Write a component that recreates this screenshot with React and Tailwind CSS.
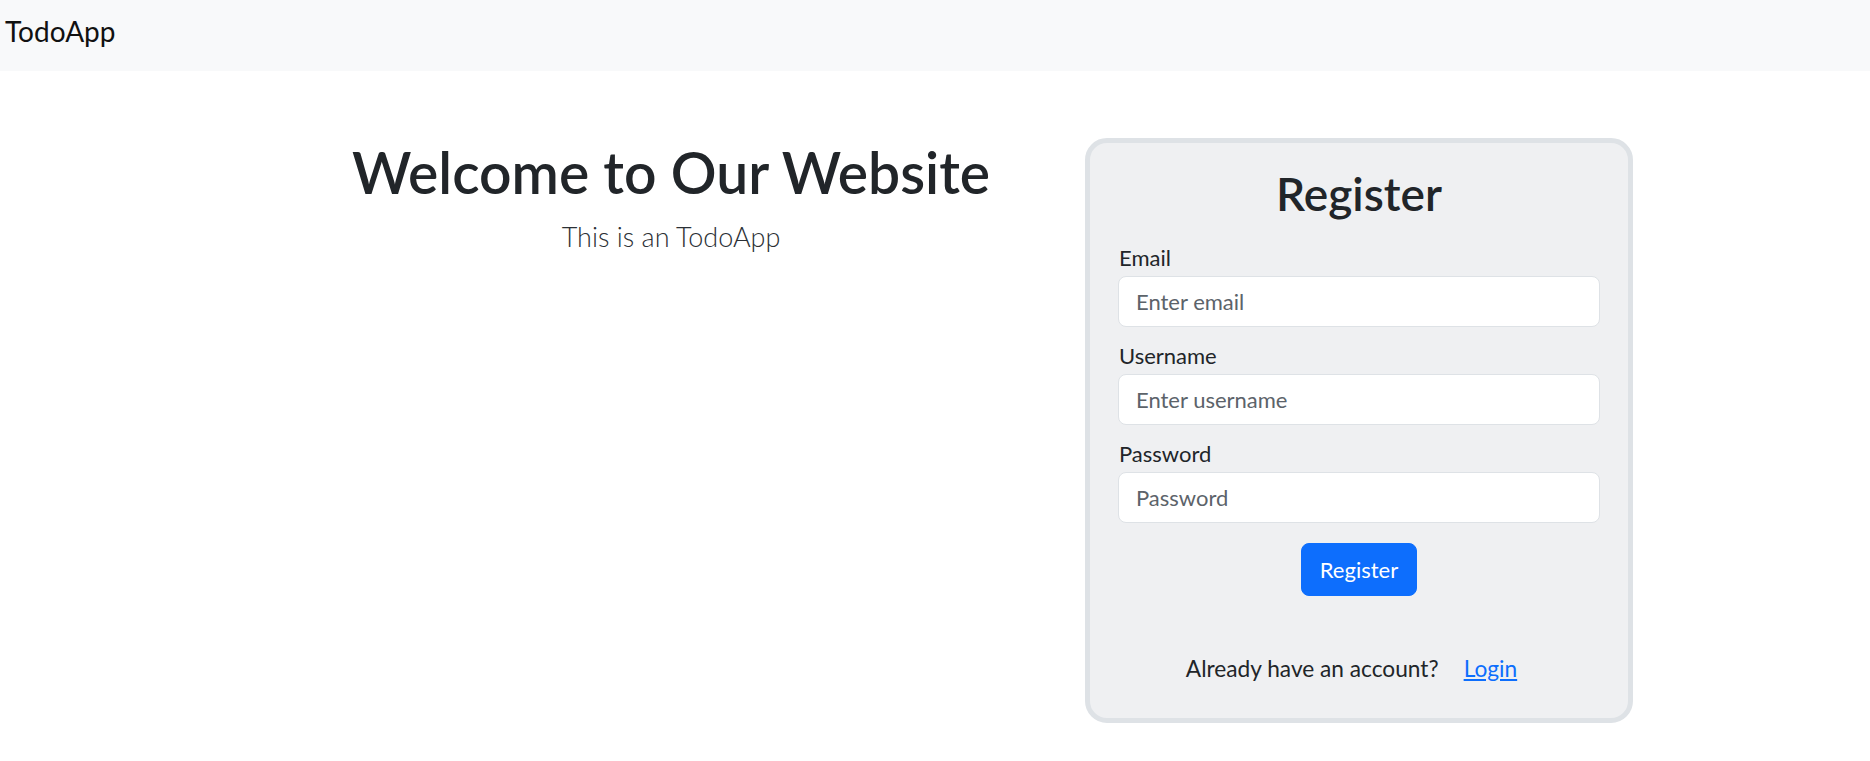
import React, { useState } from "react";

const Field = ({ label, type, placeholder, value, onChange, last }) => (
  <div className={last ? "flex flex-col" : "flex flex-col mb-[16px]"}>
    <label className="text-[22px] leading-[26px] h-[26px] text-[#212529] mb-[5px] pl-[1px]">
      {label}
    </label>
    <input
      type={type}
      value={value}
      onChange={onChange}
      placeholder={placeholder}
      className="w-full h-[51px] px-[17px] text-[22px] text-[#212529] bg-white border border-[#dee2e6] rounded-[8px] placeholder:text-[#5c636a] focus:outline-none"
    />
  </div>
);

const App = () => {
  const [form, setForm] = useState({ email: "", username: "", password: "" });

  const handleChange = (field) => (e) =>
    setForm({ ...form, [field]: e.target.value });

  const handleSubmit = (e) => {
    e.preventDefault();
  };

  return (
    <div className="min-h-screen bg-white font-['Lato',sans-serif] text-[#212529]">
      {/* navbar */}
      <nav className="h-[71px] bg-[#f8f9fa] flex items-start pt-[13px] pl-[5px]">
        <a href="#" className="text-[28px] leading-[36px] text-[#111]">
          TodoApp
        </a>
      </nav>

      <main className="flex items-start pt-[67px]">
        {/* welcome text */}
        <section className="w-[1085px] pl-[257px] flex flex-col items-center">
          <h1 className="text-[57px] leading-[68px] font-semibold whitespace-nowrap">
            Welcome to Our Website
          </h1>
          <p className="mt-[14px] text-[27px] leading-[34px] font-light text-[#2b3035]">
            This is an TodoApp
          </p>
        </section>

        {/* register card */}
        <form
          onSubmit={handleSubmit}
          className="w-[548px] bg-[#eff0f2] border-[5px] border-[#dee2e6] rounded-[22px] px-[28px] pt-[22px] pb-[36px] flex flex-col"
        >
          <h2 className="text-[46px] leading-[58px] font-semibold text-center mb-[22px]">
            Register
          </h2>

          <Field
            label="Email"
            type="email"
            placeholder="Enter email"
            value={form.email}
            onChange={handleChange("email")}
          />
          <Field
            label="Username"
            type="text"
            placeholder="Enter username"
            value={form.username}
            onChange={handleChange("username")}
          />
          <Field
            label="Password"
            type="password"
            placeholder="Password"
            value={form.password}
            onChange={handleChange("password")}
            last
          />

          <div className="flex justify-center mt-[20px]">
            <button
              type="submit"
              className="w-[116px] h-[53px] bg-[#0d6efd] text-white text-[22px] rounded-[8px] border border-[#0d6efd]"
            >
              Register
            </button>
          </div>

          <div className="flex justify-center items-center gap-[25px] mt-[60px] pr-[15px] text-[22.7px] leading-[26px]">
            <span>Already have an account?</span>
            <a href="#" className="text-[#0d6efd] underline">
              Login
            </a>
          </div>
        </form>
      </main>
    </div>
  );
};

export default App;
